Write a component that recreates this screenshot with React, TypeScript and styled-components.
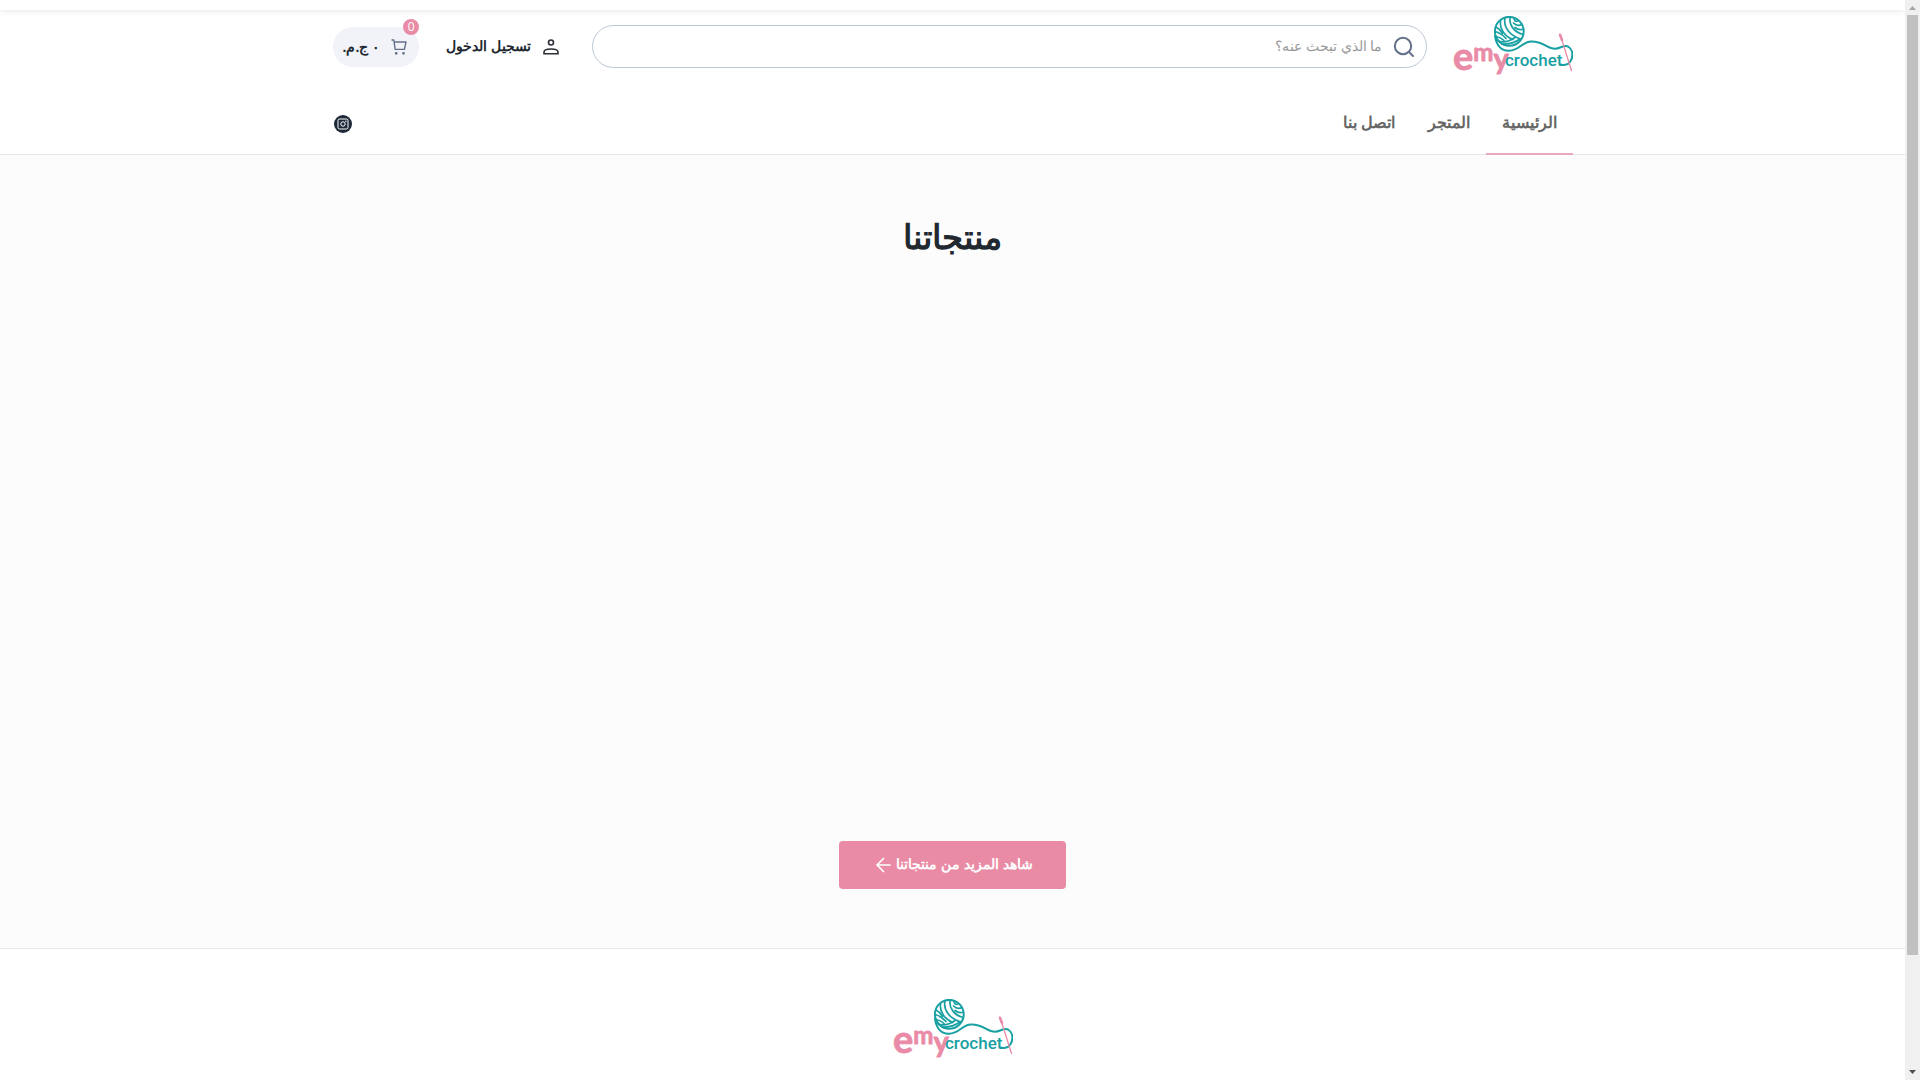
import React from "react";
import styled, { createGlobalStyle } from "styled-components";

const GlobalStyle = createGlobalStyle`
  * { box-sizing: border-box; }
  html, body { margin: 0; }
  body {
    background: #fff;
    color: #212830;
    font-family: "Liberation Sans", sans-serif;
    font-size: 14px;
    line-height: 22px;
  }
  a { color: inherit; text-decoration: none; }
  svg { display: block; flex: none; }
`;

const Window = styled.div`
  display: flex;
  height: 100vh;
  overflow: hidden;
`;

const Page = styled.div`
  flex: 1;
  min-width: 0;
  overflow: hidden;
`;

const TopStrip = styled.div`
  height: 10px;
  background: #fff;
  box-shadow: 0 1px 6px rgba(0, 0, 0, 0.1);
`;

const Container = styled.div`
  width: 100%;
  max-width: 1240px;
  margin: 0 auto;
`;

const Header = styled.header`
  border-bottom: 1px solid #e6e6e6;
`;

const MainRow = styled(Container)`
  display: flex;
  align-items: center;
  padding: 6px 0;
`;

const SearchForm = styled.form`
  flex: 1;
  display: flex;
  align-items: center;
  gap: 9px;
  height: 43px;
  margin: 0 26px 0 32px;
  padding: 0 12px;
  border: 1px solid #bcc7d6;
  border-radius: 22px;
  background: #fff;
`;

const SearchButton = styled.button`
  padding: 0;
  border: 0;
  background: none;
  color: #64708a;
`;

const SearchInput = styled.input`
  flex: 1;
  min-width: 0;
  padding: 0 0 2px;
  border: 0;
  outline: 0;
  background: none;
  font: inherit;
  color: inherit;
  &::placeholder { color: #999; opacity: 1; }
`;

const LoginLink = styled.a`
  display: flex;
  align-items: center;
  gap: 11px;
  font-weight: 700;
  margin-left: 27px;
`;

const Label = styled.span`
  padding-bottom: 2px;
`;

const CartButton = styled.button`
  position: relative;
  display: flex;
  align-items: center;
  gap: 9px;
  height: 40px;
  padding: 0 10px;
  border: 0;
  border-radius: 20px;
  background: #f1f3f8;
  color: inherit;
  font: inherit;
  font-weight: 700;
`;

const Badge = styled.span`
  position: absolute;
  top: -8px;
  right: 0;
  width: 16px;
  height: 16px;
  border-radius: 50%;
  background: #e98ba5;
  color: #fff;
  font: 400 12px/16px "Open Sans", sans-serif;
  text-align: center;
`;

const NavRow = styled(Container)`
  display: flex;
  align-items: center;
  justify-content: space-between;
  margin-top: 10px;
`;

const Nav = styled.nav`
  display: flex;
`;

const NavLink = styled.a<{ $active?: boolean }>`
  height: 62px;
  margin-bottom: -1px;
  padding: 19px 16px 0;
  border-bottom: 2px solid ${(p) => (p.$active ? "#e9a9c0" : "transparent")};
  color: #666;
  font-size: 16px;
  font-weight: 700;
`;

const Products = styled.section`
  display: flex;
  flex-direction: column;
  align-items: center;
  padding: 57px 0 59px;
  border-bottom: 1px solid #e9e9e9;
  background: #fcfcfc;
`;

const Title = styled.h2`
  margin: 0;
  font-size: 34px;
  line-height: 50px;
  font-weight: 700;
`;

const ProductGrid = styled.div`
  min-height: 579px;
`;

const MoreLink = styled.a`
  display: flex;
  align-items: center;
  height: 48px;
  padding: 0 33px;
  border-radius: 4px;
  background: #e98ba5;
  color: #fff;
  font-weight: 700;
`;

const Footer = styled.footer`
  display: flex;
  justify-content: center;
  padding-top: 50px;
`;

const ScrollTrack = styled.div`
  display: flex;
  flex-direction: column;
  align-items: center;
  width: 15px;
  background: #f0f0f0;
`;

const ScrollThumb = styled.div`
  width: 11px;
  height: 940px;
  margin-bottom: auto;
  background: #c0c0c0;
`;

const PINK = "#e98ba7";
const TEAL = "#18a0a2";

function Logo() {
  return (
    <svg width="120" height="61" viewBox="0 0 120 61" role="img" aria-label="emy crochet" direction="ltr">
      <circle cx="56.3" cy="15.3" r="14.4" fill="#fff" stroke={TEAL} strokeWidth="2" />
      <g fill="none" stroke={TEAL} strokeWidth="1.7" strokeLinecap="round">
        <path d="M52 2C50 11 57 20 68 23" />
        <path d="M57 1.500C56 9 61 16 70 18.500" />
        <path d="M61 2C61 4.500 62.500 6 65 5" />
        <path d="M60.500 7C63 9.500 66 10 69 8.500" />
        <path d="M62 11.500C64.500 13.500 68 14 70.500 13" />
        <path d="M47.500 5.500C46.500 13 52 20.500 60 23.500" />
        <path d="M43 11C46 12.500 48 14.500 49.500 17.500" />
        <path d="M42 15.500C46 16.500 50 19 53 22.500" />
        <path d="M43 20.500C46 21 49 22.500 51 24.500" />
        <path d="M45 25C51 27 57 25 62 21.500" />
        <path d="M49 28C56 28.500 62 26.500 67 23" />
        <path d="M42 20C43.500 30 49 35 56 34.700C67 34.500 68 26 78 25.600C90 25.200 94 32.700 102 32.700C107 32.700 111 28.500 115 30.500C121 34 120 42 117 46C115 49 109.500 49.500 107.500 48.500" strokeWidth="2" />
      </g>
      <path d="M107.300 19L118.500 54.500" stroke={PINK} strokeWidth="1.300" strokeLinecap="round" />
      <path d="M107 18.800L109 24" stroke={PINK} strokeWidth="2.600" strokeLinecap="round" />
      <text x="0" y="54" fill={PINK} stroke={PINK} strokeWidth="0.8" strokeLinejoin="round" fontFamily="Lato, sans-serif" fontWeight="700" fontSize="38">
        e<tspan dy="-9" fontSize="24">m</tspan><tspan dy="8" fontSize="29">y</tspan>
      </text>
      <text x="52" y="50" fill={TEAL} fontFamily="Roboto, sans-serif" fontWeight="500" fontSize="17">crochet</text>
    </svg>
  );
}

function SearchIcon() {
  return (
    <svg width="22" height="22" viewBox="0 0 22 22" fill="none" stroke="currentColor" strokeWidth="2" strokeLinecap="round">
      <circle cx="11" cy="10" r="8.200" />
      <path d="M17 16l4 4" />
    </svg>
  );
}

function UserIcon() {
  return (
    <svg width="18" height="18" viewBox="0 0 18 18" fill="none" stroke="#2b2f36" strokeWidth="1.600">
      <circle cx="9" cy="4.500" r="2.500" />
      <path d="M2 15.700v-1.500c0-1.900 3-3.200 7-3.200s7 1.300 7 3.200v1.500z" />
    </svg>
  );
}

function CartIcon() {
  return (
    <svg width="20" height="20" viewBox="0 0 20 20" fill="none" stroke="#64708a" strokeWidth="1.400" strokeLinecap="round" strokeLinejoin="round">
      <path d="M3 3h1.800l1.400 9.400h9.200L17 5H5.200" />
      <circle cx="7.200" cy="16.300" r="0.700" fill="#64708a" />
      <circle cx="14.500" cy="16.300" r="0.700" fill="#64708a" />
    </svg>
  );
}

function InstagramIcon() {
  return (
    <svg width="20" height="20" viewBox="0 0 20 20" fill="none" stroke="#fff" strokeWidth="1">
      <circle cx="10" cy="10" r="9" fill="#1d2939" stroke="none" />
      <rect x="5" y="5" width="10" height="10" rx="1.500" />
      <circle cx="10" cy="10" r="2.200" />
      <circle cx="12.900" cy="7.200" r="0.700" fill="#fff" stroke="none" />
    </svg>
  );
}

function ArrowIcon() {
  return (
    <svg width="24" height="24" viewBox="0 0 24 24" fill="none" stroke="currentColor" strokeWidth="1.700" strokeLinecap="round" strokeLinejoin="round">
      <path d="M18 12H5M11.500 5.500L5 12l6.500 6.500" />
    </svg>
  );
}

function ScrollArrow({ up }: { up?: boolean }) {
  return (
    <svg width="15" height="15" viewBox="0 0 15 15" aria-hidden="true">
      {up ? <path d="M4 10h7L7.500 6z" fill="#a3a3a3" /> : <path d="M4 5h7L7.500 9z" fill="#505050" />}
    </svg>
  );
}

export default function App() {
  return (
    <>
      <GlobalStyle />
      <Window>
        <Page dir="rtl" lang="ar">
          <TopStrip />
          <Header>
            <MainRow>
              <a href="#home"><Logo /></a>
              <SearchForm role="search">
                <SearchButton type="submit" aria-label="بحث"><SearchIcon /></SearchButton>
                <SearchInput type="search" placeholder="ما الذي تبحث عنه؟" aria-label="ما الذي تبحث عنه؟" />
              </SearchForm>
              <LoginLink href="#login"><UserIcon /><Label>تسجيل الدخول</Label></LoginLink>
              <CartButton type="button">
                <CartIcon />
                <span>٠ ج.م.</span>
                <Badge>0</Badge>
              </CartButton>
            </MainRow>
            <NavRow>
              <Nav>
                <NavLink href="#home" $active>الرئيسية</NavLink>
                <NavLink href="#shop">المتجر</NavLink>
                <NavLink href="#contact">اتصل بنا</NavLink>
              </Nav>
              <a href="#instagram" aria-label="Instagram"><InstagramIcon /></a>
            </NavRow>
          </Header>
          <main>
            <Products>
              <Title>منتجاتنا</Title>
              <ProductGrid />
              <MoreLink href="#shop"><Label>شاهد المزيد من منتجاتنا</Label><ArrowIcon /></MoreLink>
            </Products>
          </main>
          <Footer><a href="#home"><Logo /></a></Footer>
        </Page>
        <ScrollTrack>
          <ScrollArrow up />
          <ScrollThumb />
          <ScrollArrow />
        </ScrollTrack>
      </Window>
    </>
  );
}
